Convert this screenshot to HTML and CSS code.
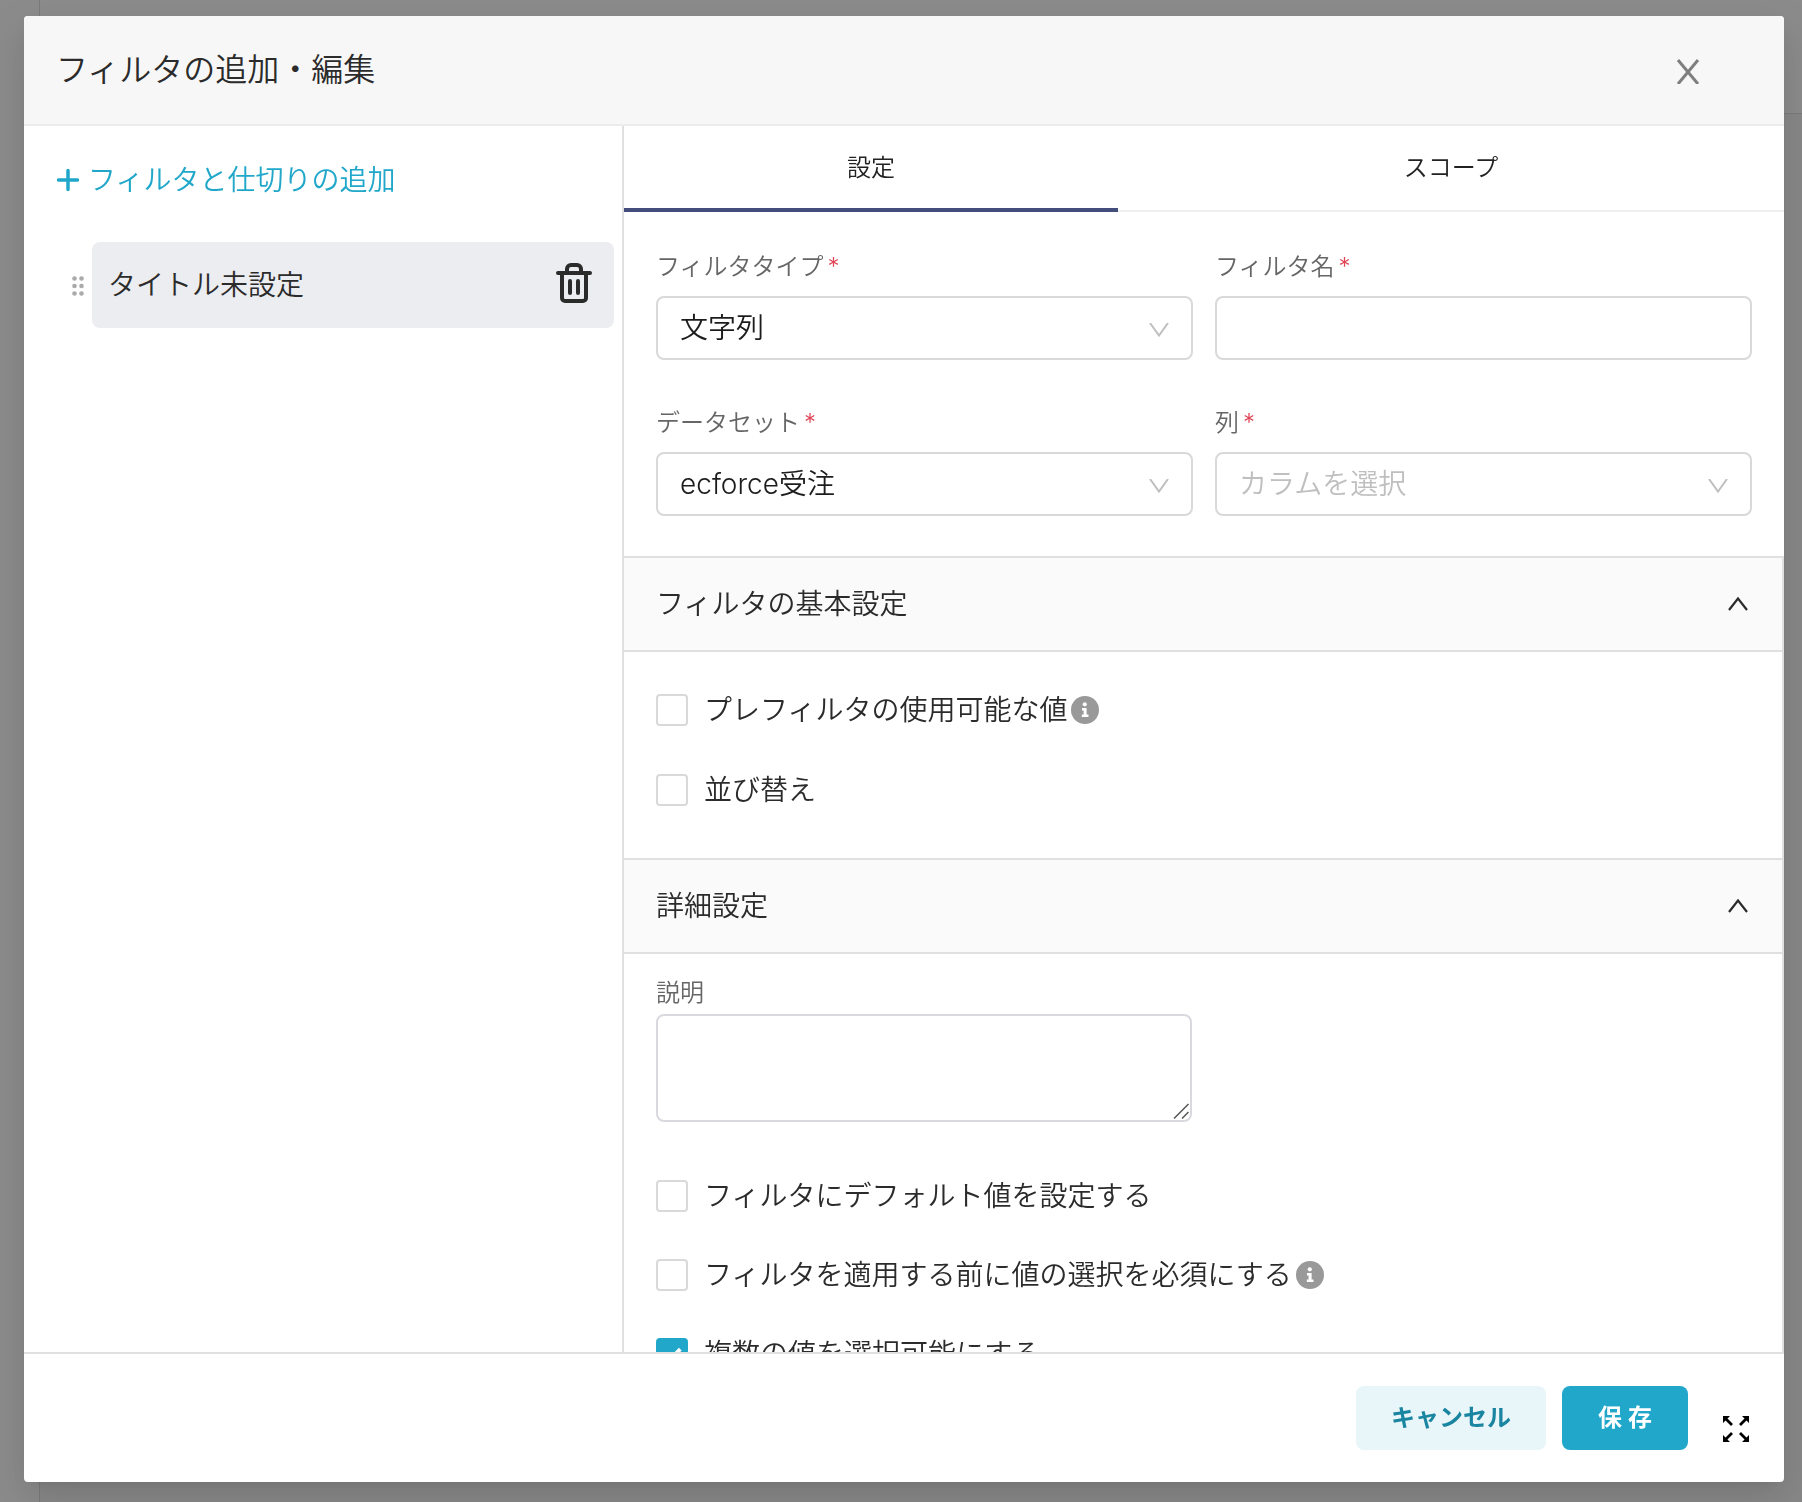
FILE: index.html
```html
<!DOCTYPE html>
<html lang="ja">
<head>
<meta charset="utf-8">
<meta name="viewport" content="width=device-width, initial-scale=1">
<title>フィルタの追加・編集</title>
<link rel="stylesheet" href="styles.css">
</head>
<body>
<div class="page" aria-hidden="true">
  <div class="page-side"></div>
  <div class="page-main"><div class="page-top"></div></div>
</div>

<div class="overlay">
  <div class="modal" role="dialog" aria-modal="true" aria-labelledby="modal-title">
    <header class="modal-header">
      <h1 class="modal-title" id="modal-title">フィルタの追加・編集</h1>
      <button class="icon-button close" type="button" aria-label="閉じる">
        <svg width="24" height="28" viewBox="0 0 24 28" fill="none" stroke="currentColor" stroke-width="3"><path d="M2 4 L22 28 M22 4 L2 28"/></svg>
      </button>
    </header>

    <div class="modal-body">
      <aside class="sidebar">
        <button class="add-link" type="button">
          <svg width="24" height="24" viewBox="0 0 24 24" fill="none" stroke="currentColor" stroke-width="3.500" stroke-linecap="round"><path d="M12 2.500V21.500M2.500 12H21.500"/></svg>
          <span>フィルタと仕切りの追加</span>
        </button>
        <div class="filter-row">
          <svg class="drag" width="12" height="22" viewBox="0 0 12 22" fill="currentColor"><circle cx="2.500" cy="4.500" r="2.300"/><circle cx="9.500" cy="4.500" r="2.300"/><circle cx="2.500" cy="12" r="2.300"/><circle cx="9.500" cy="12" r="2.300"/><circle cx="2.500" cy="19.500" r="2.300"/><circle cx="9.500" cy="19.500" r="2.300"/></svg>
          <div class="filter-item">
            <span>タイトル未設定</span>
            <button class="icon-button trash" type="button" aria-label="削除">
              <svg width="36" height="46" viewBox="0 0 36 46" fill="none" stroke="currentColor" stroke-width="4" stroke-linecap="round" stroke-linejoin="round"><path d="M2 11H34"/><path d="M11 10V7a4 4 0 0 1 4-4h6a4 4 0 0 1 4 4v3"/><path d="M6 12V36a3 3 0 0 0 3 3h18a3 3 0 0 0 3-3V12"/><path d="M14 19V31M22 19V31"/></svg>
            </button>
          </div>
        </div>
      </aside>

      <main class="panel">
        <div class="tabs" role="tablist">
          <button class="tab tab-active" type="button" role="tab" aria-selected="true">設定</button>
          <button class="tab" type="button" role="tab" aria-selected="false">スコープ</button>
        </div>

        <form class="form-grid form-main">
          <div class="field">
            <label class="label" for="filter-type">フィルタタイプ<span class="required">*</span></label>
            <div class="select-box">
              <select class="control" id="filter-type"><option>文字列</option></select>
              <svg class="caret" width="20" height="14" viewBox="0 0 20 14" fill="none" stroke="currentColor" stroke-width="2"><path d="M1 0 L10 12.500 L19 0"/></svg>
            </div>
          </div>
          <div class="field">
            <label class="label" for="filter-name">フィルタ名<span class="required">*</span></label>
            <input class="control" id="filter-name" type="text">
          </div>
          <div class="field">
            <label class="label" for="dataset">データセット<span class="required">*</span></label>
            <div class="select-box">
              <select class="control" id="dataset"><option>ecforce受注</option></select>
              <svg class="caret" width="20" height="14" viewBox="0 0 20 14" fill="none" stroke="currentColor" stroke-width="2"><path d="M1 0 L10 12.500 L19 0"/></svg>
            </div>
          </div>
          <div class="field">
            <label class="label" for="column">列<span class="required">*</span></label>
            <div class="select-box">
              <select class="control control-empty" id="column"><option>カラムを選択</option></select>
              <svg class="caret" width="20" height="14" viewBox="0 0 20 14" fill="none" stroke="currentColor" stroke-width="2"><path d="M1 0 L10 12.500 L19 0"/></svg>
            </div>
          </div>
        </form>

        <div class="sections">
          <section>
            <button class="section-head" type="button" aria-expanded="true">
              <span>フィルタの基本設定</span>
              <svg width="20" height="14" viewBox="0 0 20 14" fill="none" stroke="currentColor" stroke-width="2.200"><path d="M1 13 L10 1.500 L19 13"/></svg>
            </button>
            <div class="section-body basic">
              <div class="check-row">
                <label class="check"><input class="box" type="checkbox"><span>プレフィルタの使用可能な値</span></label>
                <svg class="info" width="28" height="28" viewBox="0 0 28 28"><circle cx="14" cy="14" r="14" fill="#999"/><circle cx="13.800" cy="8.300" r="2.100" fill="#fff"/><path d="M11 12h4.600v6.500H17.500V21H10.800V18.500H12.600V14.400H11z" fill="#fff"/></svg>
              </div>
              <div class="check-row">
                <label class="check"><input class="box" type="checkbox"><span>並び替え</span></label>
              </div>
            </div>
          </section>

          <section>
            <button class="section-head" type="button" aria-expanded="true">
              <span>詳細設定</span>
              <svg width="20" height="14" viewBox="0 0 20 14" fill="none" stroke="currentColor" stroke-width="2.200"><path d="M1 13 L10 1.500 L19 13"/></svg>
            </button>
            <div class="section-body advanced">
              <div class="form-grid">
                <div class="field-tight">
                  <label class="label" for="description">説明</label>
                  <div class="area-box">
                    <textarea class="area" id="description"></textarea>
                    <svg class="grip" width="16" height="16" viewBox="0 0 16 16" fill="none" stroke="#555" stroke-width="1.500"><path d="M1 15.500 L15.500 1M9 15.500 L15.500 9"/></svg>
                  </div>
                </div>
              </div>
              <div class="check-list">
                <div class="check-row">
                  <label class="check"><input class="box" type="checkbox"><span>フィルタにデフォルト値を設定する</span></label>
                </div>
                <div class="check-row">
                  <label class="check"><input class="box" type="checkbox"><span>フィルタを適用する前に値の選択を必須にする</span></label>
                  <svg class="info" width="28" height="28" viewBox="0 0 28 28"><circle cx="14" cy="14" r="14" fill="#999"/><circle cx="13.800" cy="8.300" r="2.100" fill="#fff"/><path d="M11 12h4.600v6.500H17.500V21H10.800V18.500H12.600V14.400H11z" fill="#fff"/></svg>
                </div>
                <div class="check-row">
                  <label class="check"><input class="box" type="checkbox" checked><span>複数の値を選択可能にする</span></label>
                </div>
              </div>
            </div>
          </section>
        </div>
      </main>
    </div>

    <footer class="modal-footer">
      <button class="button button-secondary" type="button">キャンセル</button>
      <button class="button button-primary" type="button">保 存</button>
      <button class="icon-button expand" type="button" aria-label="全画面表示">
        <svg width="26" height="26" viewBox="0 0 26 26" fill="#000" stroke="#000"><path stroke="none" d="M0 0H7L0 7zM26 0V7L19 0zM0 26V19L7 26zM26 26H19L26 19z"/><path stroke-width="2.800" d="M2 2L9 9M24 2L17 9M2 24L9 17M24 24L17 17"/></svg>
      </button>
    </footer>
  </div>
</div>
</body>
</html>
```
FILE: styles.css
```css
*,
*::before,
*::after {
  box-sizing: border-box;
}

body {
  margin: 0;
  height: 100vh;
  overflow: hidden;
  background: #8c8c8c;
  color: #2b2b2b;
  font-family: Inter, "Noto Sans CJK JP", sans-serif;
  font-size: 28px;
  font-weight: 350;
  line-height: 44px;
}

button,
input,
select,
textarea {
  margin: 0;
  font: inherit;
  color: inherit;
}

button {
  padding: 0;
  border: 0;
  background: none;
  cursor: pointer;
}

svg {
  display: block;
  flex: none;
}

/* dimmed dashboard behind the dialog */
.page {
  display: flex;
  height: 100vh;
}

.page-side {
  width: 40px;
  border-right: 1px solid #7b7b7b;
}

.page-main {
  flex: 1;
  background: #888;
}

.page-top {
  height: 114px;
  border-bottom: 1px solid #7b7b7b;
  background: #8c8c8c;
}

.overlay {
  position: fixed;
  inset: 0;
  display: flex;
  padding: 16px 18px 20px 24px;
}

.modal {
  flex: 1;
  display: flex;
  flex-direction: column;
  min-width: 0;
  overflow: hidden;
  border-radius: 4px;
  background: #fff;
  box-shadow: 0 6px 12px -8px rgba(0, 0, 0, .12), 0 12px 32px rgba(0, 0, 0, .08), 0 18px 56px 16px rgba(0, 0, 0, .05);
}

.modal-header {
  display: flex;
  align-items: center;
  justify-content: space-between;
  padding: 32px 84px 32px 32px;
  border-bottom: 2px solid #ececec;
  background: #f7f7f7;
}

.modal-title {
  margin: 0;
  font-size: 32px;
  font-weight: inherit;
  line-height: 44px;
}

.close {
  color: #7f7f7f;
}

.modal-body {
  flex: 1;
  display: flex;
  min-height: 0;
}

.sidebar {
  flex: none;
  width: 600px;
  padding: 32px 8px 32px 32px;
  border-right: 2px solid #e0e0e0;
}

.add-link {
  display: flex;
  align-items: center;
  gap: 8px;
  color: #20a7c9;
}

.filter-row {
  display: flex;
  align-items: center;
  gap: 8px;
  margin-top: 40px;
  padding-left: 16px;
}

.drag {
  color: #aaa;
}

.filter-item {
  flex: 1;
  display: flex;
  align-items: center;
  justify-content: space-between;
  height: 86px;
  padding: 0 22px 0 16px;
  border-radius: 8px;
  background: #ecedf0;
}

.trash {
  color: #2b2b2b;
}

.panel {
  flex: 1;
  min-width: 0;
  overflow-y: auto;
  scrollbar-width: none;
}

.tabs {
  display: grid;
  grid-template-columns: 494fr 666fr;
  height: 86px;
}

.tab {
  border-bottom: 2px solid #f0f0f0;
  font-size: 24px;
  color: #222;
}

.tab-active {
  padding-top: 2px;
  border-bottom: 4px solid #444e7c;
}

.form-grid {
  display: grid;
  grid-template-columns: 1fr 1fr;
  gap: 44px 22px;
}

.form-main {
  padding: 36px 32px 40px;
}

.field {
  display: flex;
  flex-direction: column;
  gap: 10px;
}

.label {
  display: flex;
  gap: 4px;
  font-size: 24px;
  line-height: 38px;
  color: #666;
}

.required {
  color: #e04355;
}

.control {
  display: block;
  width: 100%;
  height: 64px;
  padding: 0 22px;
  border: 2px solid #d9d9d9;
  border-radius: 8px;
  background: #fff;
  color: #1c1c1c;
  appearance: none;
}

.control-empty {
  color: #bfbfbf;
}

.select-box,
.area-box {
  position: relative;
}

.caret {
  position: absolute;
  top: 27px;
  right: 24px;
  color: #bfbfbf;
  pointer-events: none;
}

.sections {
  border-right: 2px solid #e0e0e0;
}

.section-head {
  display: flex;
  align-items: center;
  justify-content: space-between;
  width: 100%;
  height: 96px;
  padding: 0 34px 0 32px;
  border-top: 2px solid #e0e0e0;
  border-bottom: 2px solid #e0e0e0;
  background: #fafafa;
  text-align: left;
}

.basic {
  display: grid;
  gap: 36px;
  padding: 36px 30px 46px 32px;
}

.advanced {
  padding: 20px 32px 32px;
}

.field-tight {
  display: grid;
  gap: 2px;
}

.area {
  display: block;
  width: 100%;
  height: 108px;
  padding: 8px 22px;
  border: 2px solid #d9d9e0;
  border-radius: 8px;
  resize: none;
}

.grip {
  position: absolute;
  right: 3px;
  bottom: 3px;
}

.check-list {
  display: grid;
  gap: 35px;
  margin-top: 52px;
}

.check-row {
  display: flex;
  align-items: center;
  gap: 4px;
}

.check {
  display: flex;
  align-items: center;
  gap: 16px;
}

.box {
  position: relative;
  flex: none;
  width: 32px;
  height: 32px;
  border: 2px solid #d9d9d9;
  border-radius: 4px;
  background: #fff;
  appearance: none;
}

.box:checked {
  border-color: #20a7c9;
  background: #20a7c9;
}

.box:checked::after {
  content: "";
  position: absolute;
  top: 4px;
  left: 8px;
  width: 11px;
  height: 18px;
  border: solid #fff;
  border-width: 0 4px 4px 0;
  transform: rotate(45deg);
}

.modal-footer {
  display: flex;
  justify-content: flex-end;
  gap: 16px;
  padding: 32px 35px 32px 32px;
  border-top: 2px solid #e0e0e0;
}

.button {
  min-width: 126px;
  height: 64px;
  padding: 0 35px;
  border-radius: 8px;
  font-size: 24px;
  font-weight: 600;
}

.button-secondary {
  background: #e9f6f9;
  color: #1a85a0;
}

.button-primary {
  background: #20a7c9;
  color: #fff;
}

.expand {
  align-self: flex-end;
  margin: 0 0 8px 19px;
}
```
